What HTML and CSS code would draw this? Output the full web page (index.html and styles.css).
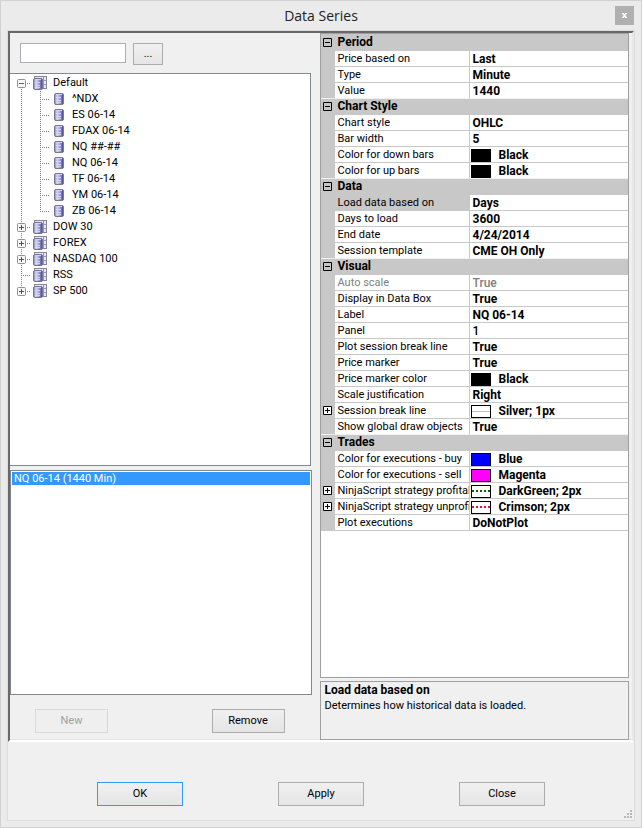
FILE: index.html
```html
<!DOCTYPE html>
<html lang="en">
	<head>
		<meta charset="UTF-8">
		<meta name="viewport" content="width=device-width, initial-scale=1">
		<title>Data Series</title>
		<link rel="stylesheet" href="styles.css">
	</head>
	<body>
		<!-- shared icons -->
		<svg class="defs" aria-hidden="true">
			<defs>
				<linearGradient id="cyl" x1="0" x2="1" y1="0" y2="0">
					<stop offset="0" stop-color="#8484c0"/>
					<stop offset="0.3" stop-color="#d4d4f0"/>
					<stop offset="0.6" stop-color="#a0a0d6"/>
					<stop offset="1" stop-color="#40408a"/>
				</linearGradient>
			</defs>
			<symbol id="db" viewBox="0 0 22 16">
				<rect x="4.5" y="2.5" width="9" height="11" rx="1.5" fill="url(#cyl)" stroke="#74749c"/>
				<path d="M6 3.5h6" stroke="#d4d4ee"/>
				<path d="M6 6.5h5M6 9.5h5M6 11.5h5" stroke="#d8d8e4"/>
			</symbol>
			<symbol id="dbs" viewBox="0 0 22 16">
				<rect x="3.5" y="1.5" width="12" height="12" fill="#e6e6f6" stroke="#85858f"/>
				<path d="M12.5 2v11M4 5.5h11M4 9.5h11" stroke="#9898a8"/>
				<rect x="2.5" y="3.5" width="9" height="11" rx="1.5" fill="url(#cyl)" stroke="#74749c"/>
				<path d="M4 4.5h6" stroke="#d4d4ee"/>
				<path d="M4 7.5h5M4 10.5h5M4 12.5h5" stroke="#d8d8e4"/>
			</symbol>
			<symbol id="minus" viewBox="0 0 19 16">
				<path class="dots" d="M9.5 14v2M15 8.5h4"/>
				<rect x="5.5" y="4.5" width="8" height="8" rx="1" fill="#f6f6f6" stroke="#919191"/>
				<path d="M7 8.5h5" stroke="#4b63a7"/>
			</symbol>
			<symbol id="plus" viewBox="0 0 19 16">
				<path class="dots" d="M9.5 0v4M9.5 14v2M15 8.5h4"/>
				<rect x="5.5" y="4.5" width="8" height="8" rx="1" fill="#f6f6f6" stroke="#919191"/>
				<path d="M7 8.5h5M9.5 6v5" stroke="#36528c"/>
			</symbol>
			<symbol id="plus-end" viewBox="0 0 19 16">
				<path class="dots" d="M9.5 0v4M15 8.5h4"/>
				<rect x="5.5" y="4.5" width="8" height="8" rx="1" fill="#f6f6f6" stroke="#919191"/>
				<path d="M7 8.5h5M9.5 6v5" stroke="#36528c"/>
			</symbol>
			<symbol id="vert" viewBox="0 0 19 16"><path class="dots" d="M9.5 0v16"/></symbol>
			<symbol id="tee" viewBox="0 0 19 16"><path class="dots" d="M9.5 0v16M9 8.5h10"/></symbol>
			<symbol id="corner" viewBox="0 0 19 16"><path class="dots" d="M9.5 0v9M11 8.5h8"/></symbol>
			<symbol id="open" viewBox="0 0 9 9"><path d="M.5 .5h8v8h-8zM2 4.5h5" fill="none" stroke="#000"/></symbol>
			<symbol id="closed" viewBox="0 0 9 9"><path d="M.5 .5h8v8h-8z" fill="#fff" stroke="#000"/><path d="M2 4.5h5M4.5 2v5" stroke="#000"/></symbol>
		</svg>

		<div class="window">
			<header class="titlebar">
				<h1>Data Series</h1>
				<button class="close" aria-label="Close window"><svg width="5" height="5" viewBox="0 0 5 5"><path d="M0 .5h2M3 .5h2M0 4.5h2M3 4.5h2" stroke="#fff"/><path d="M1 .5l3 4M4 .5l-3 4" stroke="#fff" stroke-width="1.5"/></svg></button>
			</header>
			<main class="client">
				<div class="panel">
					<section class="left">
						<div class="search">
							<input type="text" aria-label="Instrument">
							<button class="more">...</button>
						</div>
						<ul class="tree">
							<li>
								<div class="node"><button aria-label="Collapse Default"><svg class="cell"><use href="#minus"/></svg></button><svg class="ico"><use href="#dbs"/></svg>Default</div>
								<ul>
									<li class="node"><svg class="cell"><use href="#vert"/></svg><svg class="cell"><use href="#tee"/></svg><svg class="ico"><use href="#db"/></svg>^NDX</li>
									<li class="node"><svg class="cell"><use href="#vert"/></svg><svg class="cell"><use href="#tee"/></svg><svg class="ico"><use href="#db"/></svg>ES 06-14</li>
									<li class="node"><svg class="cell"><use href="#vert"/></svg><svg class="cell"><use href="#tee"/></svg><svg class="ico"><use href="#db"/></svg>FDAX 06-14</li>
									<li class="node"><svg class="cell"><use href="#vert"/></svg><svg class="cell"><use href="#tee"/></svg><svg class="ico"><use href="#db"/></svg>NQ ##-##</li>
									<li class="node"><svg class="cell"><use href="#vert"/></svg><svg class="cell"><use href="#tee"/></svg><svg class="ico"><use href="#db"/></svg>NQ 06-14</li>
									<li class="node"><svg class="cell"><use href="#vert"/></svg><svg class="cell"><use href="#tee"/></svg><svg class="ico"><use href="#db"/></svg>TF 06-14</li>
									<li class="node"><svg class="cell"><use href="#vert"/></svg><svg class="cell"><use href="#tee"/></svg><svg class="ico"><use href="#db"/></svg>YM 06-14</li>
									<li class="node"><svg class="cell"><use href="#vert"/></svg><svg class="cell"><use href="#corner"/></svg><svg class="ico"><use href="#db"/></svg>ZB 06-14</li>
								</ul>
							</li>
							<li class="node"><button aria-label="Expand DOW 30"><svg class="cell"><use href="#plus"/></svg></button><svg class="ico"><use href="#dbs"/></svg>DOW 30</li>
							<li class="node"><button aria-label="Expand FOREX"><svg class="cell"><use href="#plus"/></svg></button><svg class="ico"><use href="#dbs"/></svg>FOREX</li>
							<li class="node"><button aria-label="Expand NASDAQ 100"><svg class="cell"><use href="#plus"/></svg></button><svg class="ico"><use href="#dbs"/></svg>NASDAQ 100</li>
							<li class="node"><svg class="cell"><use href="#tee"/></svg><svg class="ico"><use href="#dbs"/></svg>RSS</li>
							<li class="node"><button aria-label="Expand SP 500"><svg class="cell"><use href="#plus-end"/></svg></button><svg class="ico"><use href="#dbs"/></svg>SP 500</li>
						</ul>
						<select class="series" size="12" aria-label="Data series">
							<option selected>NQ 06-14 (1440 Min)</option>
						</select>
						<div class="actions">
							<button class="btn" disabled>New</button>
							<button class="btn">Remove</button>
						</div>
					</section>
					<section class="right">
						<div class="grid">
							<table>
								<colgroup><col class="gutter"><col class="name"><col></colgroup>
								<tbody>
									<tr class="cat"><td><button aria-label="Toggle Period"><svg><use href="#open"/></svg></button></td><th colspan="2">Period</th></tr>
									<tr><td></td><th>Price based on</th><td>Last</td></tr>
									<tr><td></td><th>Type</th><td>Minute</td></tr>
									<tr><td></td><th>Value</th><td>1440</td></tr>
								</tbody>
								<tbody>
									<tr class="cat"><td><button aria-label="Toggle Chart Style"><svg><use href="#open"/></svg></button></td><th colspan="2">Chart Style</th></tr>
									<tr><td></td><th>Chart style</th><td>OHLC</td></tr>
									<tr><td></td><th>Bar width</th><td>5</td></tr>
									<tr><td></td><th>Color for down bars</th><td><div class="pick"><i class="swatch black"></i>Black</div></td></tr>
									<tr><td></td><th>Color for up bars</th><td><div class="pick"><i class="swatch black"></i>Black</div></td></tr>
								</tbody>
								<tbody>
									<tr class="cat"><td><button aria-label="Toggle Data"><svg><use href="#open"/></svg></button></td><th colspan="2">Data</th></tr>
									<tr class="current"><td></td><th>Load data based on</th><td>Days</td></tr>
									<tr><td></td><th>Days to load</th><td>3600</td></tr>
									<tr><td></td><th>End date</th><td>4/24/2014</td></tr>
									<tr><td></td><th>Session template</th><td>CME OH Only</td></tr>
								</tbody>
								<tbody>
									<tr class="cat"><td><button aria-label="Toggle Visual"><svg><use href="#open"/></svg></button></td><th colspan="2">Visual</th></tr>
									<tr class="off"><td></td><th>Auto scale</th><td>True</td></tr>
									<tr><td></td><th>Display in Data Box</th><td>True</td></tr>
									<tr><td></td><th>Label</th><td>NQ 06-14</td></tr>
									<tr><td></td><th>Panel</th><td class="plain">1</td></tr>
									<tr><td></td><th>Plot session break line</th><td>True</td></tr>
									<tr><td></td><th>Price marker</th><td>True</td></tr>
									<tr><td></td><th>Price marker color</th><td><div class="pick"><i class="swatch black"></i>Black</div></td></tr>
									<tr><td></td><th>Scale justification</th><td>Right</td></tr>
									<tr><td><button aria-label="Expand Session break line"><svg><use href="#closed"/></svg></button></td><th>Session break line</th><td><div class="pick"><i class="swatch silver"></i>Silver; 1px</div></td></tr>
									<tr><td></td><th>Show global draw objects</th><td>True</td></tr>
								</tbody>
								<tbody>
									<tr class="cat"><td><button aria-label="Toggle Trades"><svg><use href="#open"/></svg></button></td><th colspan="2">Trades</th></tr>
									<tr><td></td><th>Color for executions - buy</th><td><div class="pick"><i class="swatch blue"></i>Blue</div></td></tr>
									<tr><td></td><th>Color for executions - sell</th><td><div class="pick"><i class="swatch magenta"></i>Magenta</div></td></tr>
									<tr><td><button aria-label="Expand profitable trade line"><svg><use href="#closed"/></svg></button></td><th>NinjaScript strategy profitable</th><td><div class="pick"><i class="swatch green"></i>DarkGreen; 2px</div></td></tr>
									<tr><td><button aria-label="Expand unprofitable trade line"><svg><use href="#closed"/></svg></button></td><th>NinjaScript strategy unprofitable</th><td><div class="pick"><i class="swatch crimson"></i>Crimson; 2px</div></td></tr>
									<tr><td></td><th>Plot executions</th><td>DoNotPlot</td></tr>
								</tbody>
							</table>
						</div>
						<div class="help">
							<h2>Load data based on</h2>
							<p>Determines how historical data is loaded.</p>
						</div>
					</section>
				</div>
				<footer class="footer">
					<button class="btn default">OK</button>
					<button class="btn">Apply</button>
					<button class="btn">Close</button>
					<svg class="grip" viewBox="0 0 8 8"><path d="M6 0h2v2h-2zM3 3h2v2h-2zM6 3h2v2h-2zM0 6h2v2h-2zM3 6h2v2h-2zM6 6h2v2h-2z" fill="#b8b8b8"/></svg>
				</footer>
			</main>
		</div>
	</body>
</html>
```
FILE: styles.css
```css
*{
	margin: 0;
	padding: 0;
	box-sizing: border-box;
}
body, button, input, select{
	font-family: Roboto, "Liberation Sans", sans-serif;
	font-size: 11px;
	line-height: 16px;
	color: #000;
}
ul{
	list-style: none;
}
svg{
	display: block;
	flex: none;
}
.defs{
	position: absolute;
	width: 0;
	height: 0;
}
.window{
	display: flex;
	flex-direction: column;
	min-height: 100vh;
	margin-right: 1px;
	padding: 0 6px 6px;
	background: #ebebeb;
	border: 1px solid #d2d2d2;
}
.titlebar{
	display: flex;
	align-items: center;
	height: 29px;
}
.titlebar h1{
	flex: 1;
	padding-left: 20px;
	font: 14px/20px "Open Sans", sans-serif;
	text-align: center;
	color: #222;
}
.close{
	display: flex;
	align-items: center;
	justify-content: center;
	width: 19px;
	height: 19px;
	margin-right: 1px;
	border: 0;
	background: #b0b0b0;
}
.client{
	flex: 1;
	display: flex;
	flex-direction: column;
	background: #f0f0f0;
	border: 1px solid #dcdcdc;
}
.panel{
	flex: 1;
	display: flex;
	gap: 8px;
	padding-right: 3px;
	border: 2px solid;
	border-color: #696969 #e8e8e8 #fff #696969;
	box-shadow: inset 0 -1px #e3e3e3;
}
.left{
	flex: 301;
	min-width: 0;
	display: flex;
	flex-direction: column;
}
.search{
	display: flex;
	gap: 7px;
	height: 40px;
	padding: 10px;
}
.search input{
	width: 106px;
	height: 20px;
	padding: 0 3px;
	border: 1px solid #abadb3;
	background: #fff;
}
.more, .btn{
	border: 1px solid #acacac;
	background: linear-gradient(#f0f0f0, #e5e5e5);
}
.more{
	flex: none;
	width: 30px;
	height: 22px;
}
.tree{
	flex: 393;
	margin-right: 1px;
	padding: 1px 2px;
	background: #fff;
	border: 1px solid #828790;
	border-left: 0;
}
.node{
	display: flex;
	height: 16px;
	white-space: nowrap;
}
.node button, .grid button{
	border: 0;
	background: none;
}
.cell{
	width: 19px;
	height: 16px;
}
.ico{
	width: 22px;
	height: 16px;
}
.dots{
	stroke: #808080;
	stroke-dasharray: 1 1;
}
.series{
	flex: 223;
	width: 100%;
	margin-top: 4px;
	padding: 1px;
	background: #fff;
	border: 1px solid #828790;
	border-radius: 0;
	outline: 0;
	overflow: hidden;
}
.series option{
	min-height: 13px;
	padding: 0 2px;
	line-height: 13px;
}
.series option:checked{
	background: #3399ff linear-gradient(#3399ff, #3399ff);
	color: #fff;
	-webkit-text-fill-color: #fff;
}
.actions{
	display: flex;
	justify-content: space-between;
	padding: 14px 27px 7px 25px;
}
.btn{
	width: 73px;
	height: 24px;
}
.btn:disabled{
	color: #a0a0a0;
	background: #efefef;
	border-color: #d9d9d9;
}
.right{
	flex: 309;
	min-width: 0;
	display: flex;
	flex-direction: column;
	gap: 3px;
}
.grid{
	flex: 1;
	background: #fff;
	border: 1px solid #a0a0a0;
}
.grid table{
	width: 100%;
	table-layout: fixed;
	border-spacing: 0;
	border-top: 1px solid #c8c8c8;
}
.gutter{
	width: 14px;
}
.name{
	width: 135px;
}
.grid td, .grid th{
	height: 16px;
	line-height: 15px;
	border-bottom: 1px solid #c8c8c8;
	text-align: left;
	white-space: nowrap;
	overflow: hidden;
}
.grid th{
	padding-left: 3px;
	border-right: 1px solid #c8c8c8;
	font-weight: normal;
}
.grid td{
	padding: 1px 0 0 3px;
	font-size: 12px;
	line-height: 14px;
	font-weight: bold;
}
.grid td:first-child{
	padding: 0 0 0 2px;
	background: #c8c8c8;
}
.grid td svg{
	width: 9px;
	height: 9px;
}
.grid td button{
	display: block;
}
.grid .cat th{
	background: #c8c8c8;
	font-size: 12px;
	font-weight: bold;
}
.grid .current th{
	background: #c8c8c8;
}
.grid tbody:not(:last-child) tr:last-child > *{
	border-bottom-color: #f0f0f0;
}
.grid .off th, .grid .off td{
	color: #808080;
}
.grid .off td, .grid td.plain{
	font-weight: 500;
}
.pick{
	display: flex;
	align-items: center;
	gap: 8px;
	height: 14px;
	margin-left: -2px;
}
.swatch{
	width: 20px;
	height: 13px;
	border: 1px solid #000;
}
.black{
	background: #000;
}
.blue{
	background: #00f;
}
.magenta{
	background: #f0f;
}
.silver{
	background: linear-gradient(#c0c0c0, #c0c0c0) center / 100% 1px no-repeat;
}
.green{
	background: repeating-linear-gradient(90deg, #006400 0 2px, #fff 2px 4px) center / 100% 2px no-repeat;
}
.crimson{
	background: repeating-linear-gradient(90deg, #dc143c 0 2px, #fff 2px 4px) center / 100% 2px no-repeat;
}
.help{
	min-height: 59px;
	padding: 0 4px;
	border: 1px solid #a0a0a0;
}
.help h2{
	font-size: 12px;
	line-height: 16px;
}
.footer{
	position: relative;
	display: flex;
	justify-content: center;
	gap: 95px;
	padding: 40px 8px 14px;
}
.footer .btn{
	width: 86px;
}
.footer .default{
	border-color: #3399ff;
}
.grip{
	position: absolute;
	right: 2px;
	bottom: 2px;
	width: 8px;
	height: 8px;
}
```
